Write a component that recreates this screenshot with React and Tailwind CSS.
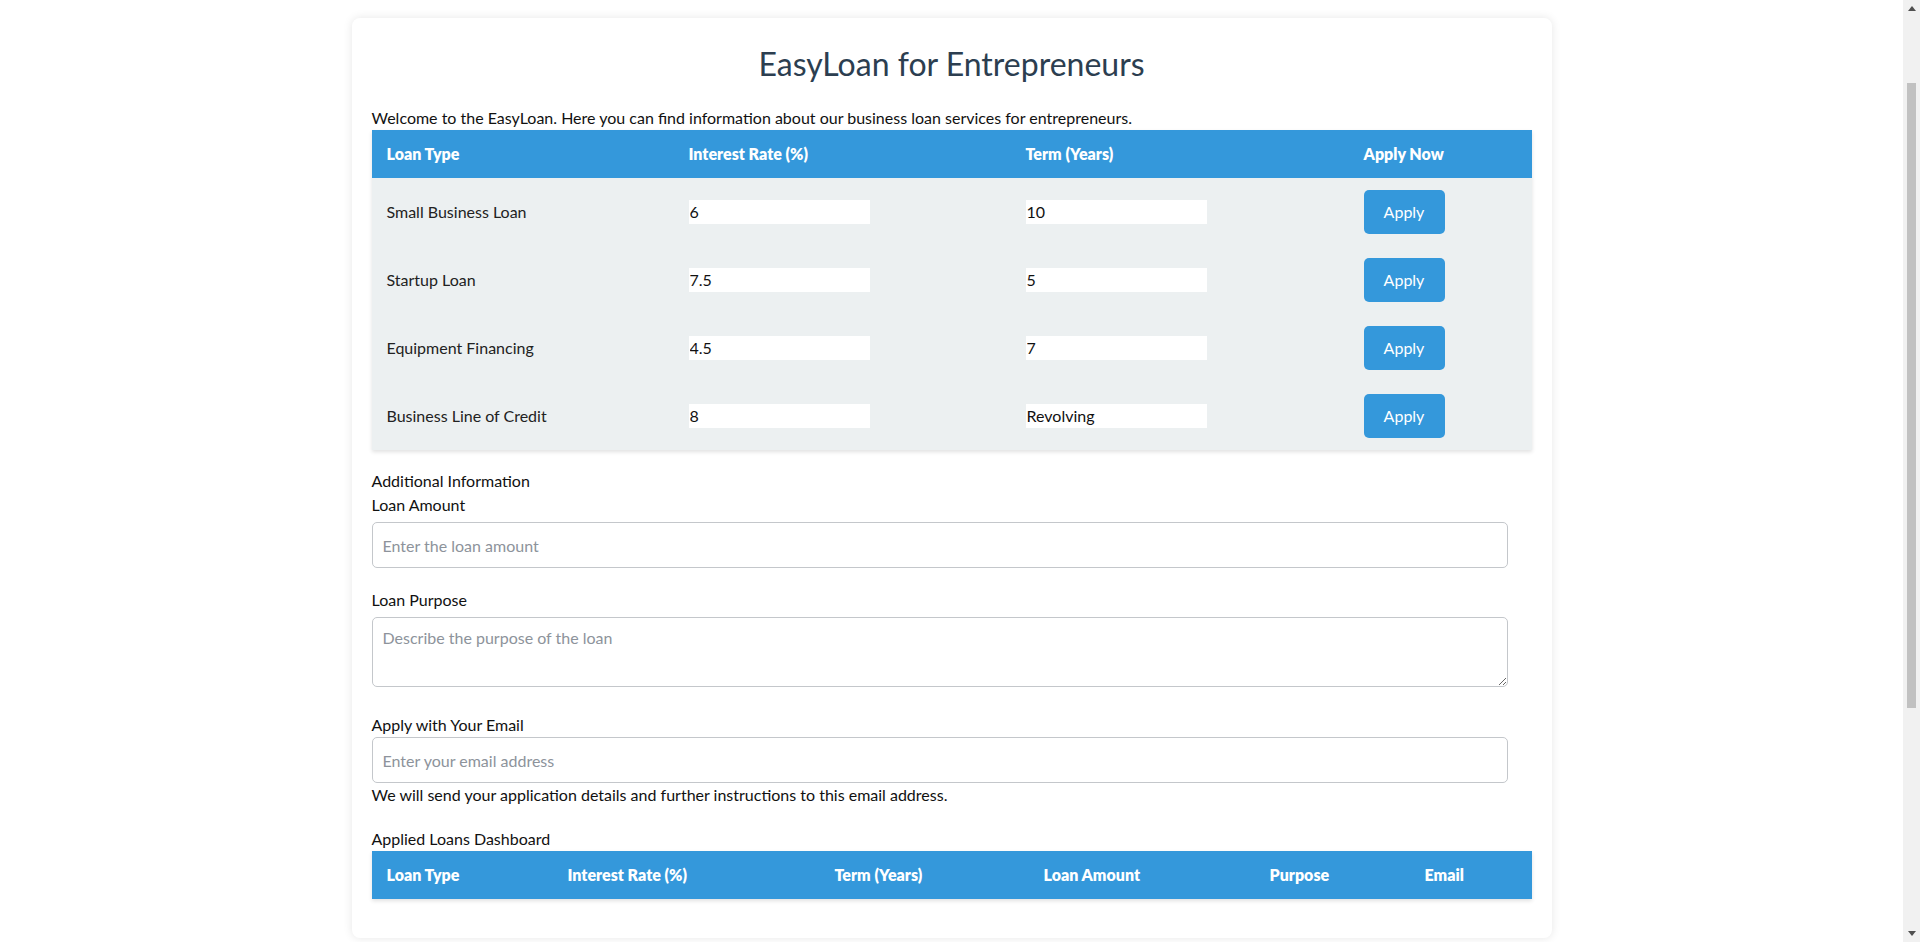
const loans = [
  { type: 'Small Business Loan', rate: '6', term: '10' },
  { type: 'Startup Loan', rate: '7.5', term: '5' },
  { type: 'Equipment Financing', rate: '4.5', term: '7' },
  { type: 'Business Line of Credit', rate: '8', term: 'Revolving' },
];

const dashCols = [
  { label: 'Loan Type', w: 'w-[181px]' },
  { label: 'Interest Rate (%)', w: 'w-[267px]' },
  { label: 'Term (Years)', w: 'w-[209px]' },
  { label: 'Loan Amount', w: 'w-[226px]' },
  { label: 'Purpose', w: 'w-[155px]' },
  { label: 'Email', w: 'w-[122px]' },
];

// browser-style scrollbar strip seen on the right edge
const ScrollStrip = () => (
  <div className="flex h-full w-[17px] shrink-0 flex-col items-center bg-[#f1f1f1]">
    <div className="flex h-[17px] w-full items-center justify-center">
      <svg width="8" height="5" viewBox="0 0 8 5">
        <path d="M0 5 L4 0 L8 5 Z" fill="#505050" />
      </svg>
    </div>
    <div className="mt-[66px] h-[625px] w-[9px] bg-[#c1c1c1]" />
    <div className="flex-1" />
    <div className="flex h-[17px] w-full items-center justify-center">
      <svg width="8" height="5" viewBox="0 0 8 5">
        <path d="M0 0 L8 0 L4 5 Z" fill="#505050" />
      </svg>
    </div>
  </div>
);

export default function App() {
  return (
    <div className="flex h-[942px] overflow-hidden bg-white text-[16px] text-[#111] font-['Lato','Liberation_Sans',sans-serif]">
      <div className="flex-1">
        <div className="mx-auto mt-[18px] w-[1200px] rounded-[8px] bg-white px-[20px] pt-[27px] pb-[39px] shadow-[0_0_10px_rgba(0,0,0,0.1)]">
          <h1 className="text-center text-[32px] leading-[38px] text-[#2c3e50]">EasyLoan for Entrepreneurs</h1>
          <p className="mt-[23px] leading-[24px]">
            Welcome to the EasyLoan. Here you can find information about our business loan services for entrepreneurs.
          </p>

          <table className="w-full border-collapse shadow-[0_2px_4px_rgba(0,0,0,0.12)]">
            <thead>
              <tr className="h-[48px] bg-[#3498db] text-left text-white">
                <th className="w-[302px] px-[15px] font-extrabold">Loan Type</th>
                <th className="w-[337px] px-[15px] font-extrabold">Interest Rate (%)</th>
                <th className="w-[338px] px-[15px] font-extrabold">Term (Years)</th>
                <th className="px-[15px] font-extrabold">Apply Now</th>
              </tr>
            </thead>
            <tbody className="bg-[#ecf0f1] text-[#222]">
              {loans.map((l) => (
                <tr key={l.type} className="h-[68px]">
                  <td className="px-[15px]">{l.type}</td>
                  <td className="px-[15px]">
                    <input
                      readOnly
                      value={l.rate}
                      className="block h-[24px] w-[181px] border-0 bg-white px-[1px] text-[#111] outline-none"
                    />
                  </td>
                  <td className="px-[15px]">
                    <input
                      readOnly
                      value={l.term}
                      className="block h-[24px] w-[181px] border-0 bg-white px-[1px] text-[#111] outline-none"
                    />
                  </td>
                  <td className="px-[15px]">
                    <button className="h-[44px] w-[81px] rounded-[5px] bg-[#3498db] text-white">Apply</button>
                  </td>
                </tr>
              ))}
            </tbody>
          </table>

          <div className="mt-[19px] leading-[24px]">Additional Information</div>
          <label className="block leading-[24px]">Loan Amount</label>
          <input
            placeholder="Enter the loan amount"
            className="mt-[5px] block h-[46px] w-[1136px] rounded-[5px] border border-[#c4c7cb] px-[10px] outline-none placeholder:text-[#8d939b]"
          />

          <label className="mt-[20px] block leading-[24px]">Loan Purpose</label>
          <textarea
            placeholder="Describe the purpose of the loan"
            className="mt-[5px] block h-[70px] w-[1136px] rounded-[5px] border border-[#c4c7cb] px-[10px] py-[8px] leading-[24px] outline-none placeholder:text-[#8d939b]"
          />

          <label className="mt-[26px] block leading-[24px]">Apply with Your Email</label>
          <input
            placeholder="Enter your email address"
            className="block h-[46px] w-[1136px] rounded-[5px] border border-[#c4c7cb] px-[10px] outline-none placeholder:text-[#8d939b]"
          />
          <p className="leading-[24px]">We will send your application details and further instructions to this email address.</p>

          <div className="mt-[20px] leading-[24px]">Applied Loans Dashboard</div>
          <table className="w-full border-collapse shadow-[0_2px_4px_rgba(0,0,0,0.12)]">
            <thead>
              <tr className="h-[48px] bg-[#3498db] text-left text-white">
                {dashCols.map((c) => (
                  <th key={c.label} className={`${c.w} px-[15px] font-extrabold`}>
                    {c.label}
                  </th>
                ))}
              </tr>
            </thead>
            <tbody />
          </table>
        </div>
      </div>
      <ScrollStrip />
    </div>
  );
}
